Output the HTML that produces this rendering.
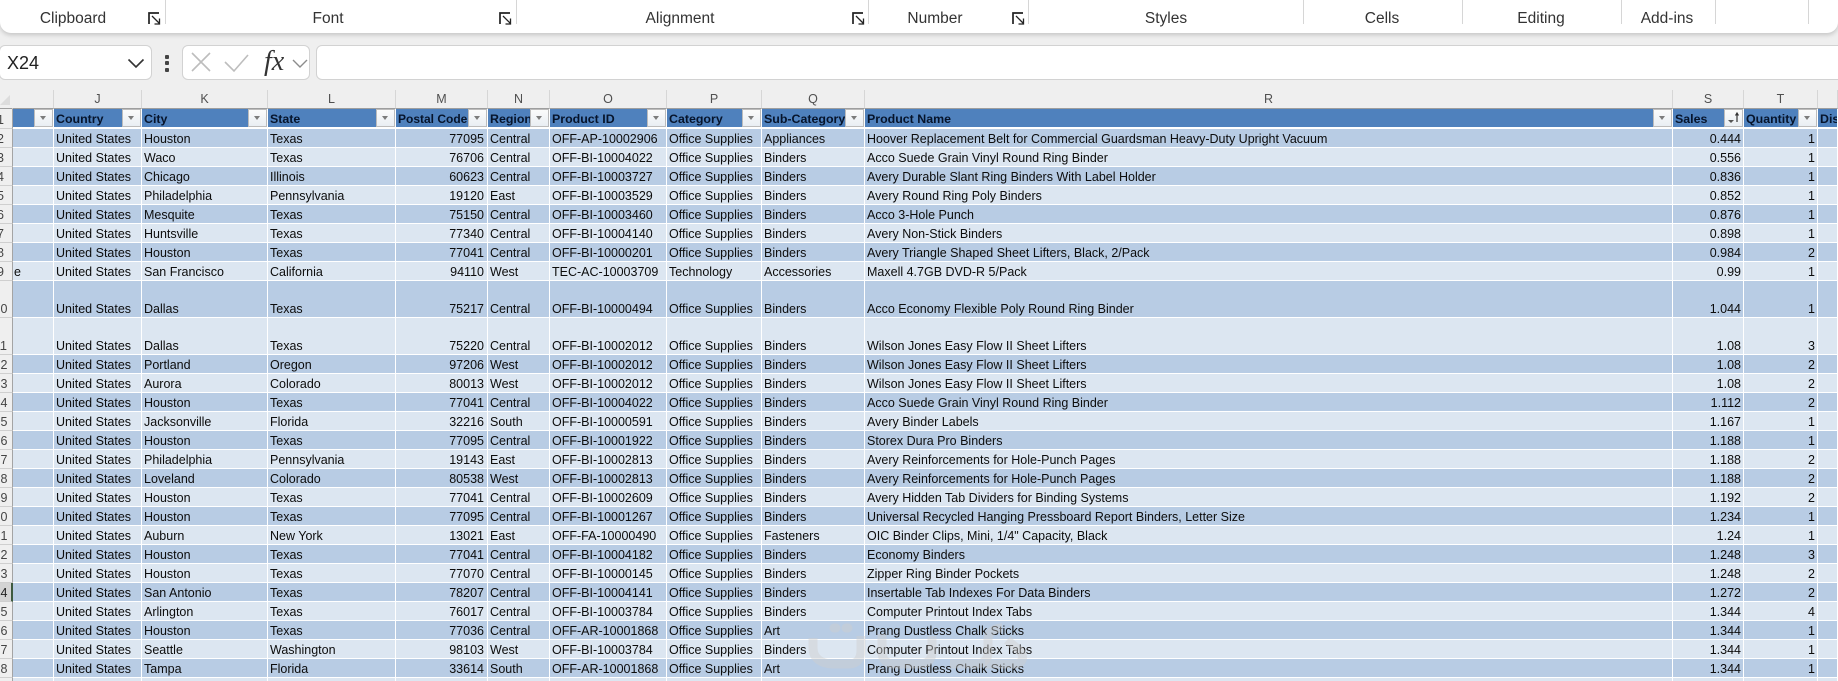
<!DOCTYPE html>
<html><head><meta charset="utf-8"><title>Sheet</title>
<style>
html,body{margin:0;padding:0;width:1838px;height:681px;overflow:hidden;background:#efefef}
body{position:relative;font-family:"Liberation Sans",sans-serif}
.rb{position:absolute;left:0;top:-10px;width:1838px;height:42.5px;background:#fff;border-radius:0 0 11px 11px;box-shadow:0 2px 5px rgba(0,0,0,.18)}
.lb{position:absolute;top:9px;font-size:15.5px;line-height:20px;color:#333;transform:translateX(-50%);white-space:nowrap}
.sp{position:absolute;top:0;width:1px;height:24px;background:#d6d6d6}
.dl{position:absolute;top:12px}
.bx{position:absolute;top:45px;height:33px;background:#fff;border:1px solid #d2d2d2;border-radius:6px}
.dot{position:absolute;left:165px;width:4px;height:4px;background:#444;border-radius:1px}
table{position:absolute;left:0;top:90px;width:1838px;border-collapse:separate;border-spacing:0;table-layout:fixed;font-size:12.5px;line-height:15px;color:#0c0c0c}
td{padding:0 0 0 2px;box-sizing:border-box;height:19px;white-space:nowrap;overflow:hidden;vertical-align:bottom;border-right:1px solid #fff;border-bottom:1px solid #fff}
.n{text-align:right;padding:0 2px 0 0}
td.n:nth-child(6){padding-right:3px}
.d td{background:#b8cce4}.l td{background:#dce6f1}
.c td{height:19px;background:#efefef;border-right:1px solid #d6d6d6;border-bottom:1px solid #9e9e9e;text-align:center;padding:0;color:#505050;line-height:17px;vertical-align:middle}
.h td{height:20px;background:#4f81bd;border-bottom:2px solid #fff;border-right:1px solid #fff;font-weight:bold;font-size:12.4px;color:#06142b;position:relative;line-height:15px;overflow:hidden}
.h td:nth-child(6){font-size:12px}
tr td:first-child{padding:0;background:#efefef;border-right:1px solid #a4a4a4;border-bottom:1px solid #cfcfcf;position:relative;color:#444;overflow:visible;font-weight:normal;font-size:12.5px}
tr.c td:first-child{border-right:1px solid #efefef;border-bottom:1px solid #9e9e9e}
td:first-child span{position:absolute;left:-50px;width:101px;bottom:0;text-align:center}
.f{position:absolute;right:0;top:0;width:19px;height:18px;box-sizing:border-box;background:linear-gradient(#fbfbfb,#e9eef3);border:1px solid #bcbcbc}
.f:after{content:"";position:absolute;left:4.5px;top:6px;border:3.5px solid transparent;border-top:4px solid #7c7c7c;border-bottom:0}
.f.s:after{display:none}
tr.sel td:first-child{background:#d4d4d4;border-right:2px solid #3d5a3f;color:#222}
.wm{position:absolute;left:0;top:0;pointer-events:none}
</style></head><body>
<div class="rb"></div>
<div class="sp" style="left:165px"></div><div class="sp" style="left:516px"></div><div class="sp" style="left:868px"></div><div class="sp" style="left:1028px"></div><div class="sp" style="left:1303px"></div><div class="sp" style="left:1462px"></div><div class="sp" style="left:1621px"></div><div class="sp" style="left:1715px"></div><div class="sp" style="left:1808px"></div>
<div class="lb" style="left:73px">Clipboard</div><div class="lb" style="left:328px">Font</div><div class="lb" style="left:680px">Alignment</div><div class="lb" style="left:935px">Number</div><div class="lb" style="left:1166px">Styles</div><div class="lb" style="left:1382px">Cells</div><div class="lb" style="left:1541px">Editing</div><div class="lb" style="left:1667px">Add-ins</div>
<svg class="dl" style="left:148px" width="13" height="13" viewBox="0 0 13 13" fill="none" stroke="#222" stroke-width="1.7"><path d="M1 12V1h10"/><path stroke-width="1.3" d="M4 4l7.500 7.500M11.500 6.500v5.500H6.500"/></svg>
<svg class="dl" style="left:499px" width="13" height="13" viewBox="0 0 13 13" fill="none" stroke="#222" stroke-width="1.7"><path d="M1 12V1h10"/><path stroke-width="1.3" d="M4 4l7.500 7.500M11.500 6.500v5.500H6.500"/></svg>
<svg class="dl" style="left:852px" width="13" height="13" viewBox="0 0 13 13" fill="none" stroke="#222" stroke-width="1.7"><path d="M1 12V1h10"/><path stroke-width="1.3" d="M4 4l7.500 7.500M11.500 6.500v5.500H6.500"/></svg>
<svg class="dl" style="left:1012px" width="13" height="13" viewBox="0 0 13 13" fill="none" stroke="#222" stroke-width="1.7"><path d="M1 12V1h10"/><path stroke-width="1.3" d="M4 4l7.500 7.500M11.500 6.500v5.500H6.500"/></svg>

<div class="bx" style="left:-1px;width:151px"></div>
<div style="position:absolute;left:7px;top:52px;font-size:18px;line-height:22px;color:#222">X24</div>
<svg style="position:absolute;left:126px;top:56px" width="20" height="14" fill="none" stroke="#333" stroke-width="1.6"><path d="M2.500 3.500l7.500 7.500 7.500-7.500"/></svg>
<div class="dot" style="top:55px"></div><div class="dot" style="top:61px"></div><div class="dot" style="top:68px"></div>
<div class="bx" style="left:182px;width:126px"></div>
<svg style="position:absolute;left:188px;top:50px" width="125" height="26" fill="none" stroke-width="1.6"><path stroke="#bdbdbd" d="M4 3l18 18M22 3L4 21"/><path stroke="#bdbdbd" d="M37 12l9 9 14-16"/><path stroke="#8c8c8c" stroke-width="1.4" d="M105 10l7 7 7-7"/></svg>
<div style="position:absolute;left:264px;top:46px;font:italic 28px/32px 'Liberation Serif',serif;color:#333">fx</div>
<div class="bx" style="left:316px;width:1540px"></div>

<table>
<colgroup><col style="width:13px"><col style="width:41px"><col style="width:88px"><col style="width:126px"><col style="width:128px"><col style="width:92px"><col style="width:62px"><col style="width:117px"><col style="width:95px"><col style="width:103px"><col style="width:808px"><col style="width:71px"><col style="width:74px"><col style="width:20px"></colgroup>
<tr class="c"><td></td><td></td><td>J</td><td>K</td><td>L</td><td>M</td><td>N</td><td>O</td><td>P</td><td>Q</td><td>R</td><td>S</td><td>T</td><td></td></tr>
<tr class="h"><td><span>1</span></td><td><i class="f"></i></td><td>Country<i class="f"></i></td><td>City<i class="f"></i></td><td>State<i class="f"></i></td><td>Postal Code<i class="f"></i></td><td>Region<i class="f"></i></td><td>Product ID<i class="f"></i></td><td>Category<i class="f"></i></td><td>Sub-Category<i class="f"></i></td><td>Product Name<i class="f"></i></td><td>Sales<i class="f s"><svg width="17" height="16" style="position:absolute;left:0;top:0"><path d="M3 10h6l-3 3z" fill="#555"/><path d="M12 12V4M10.500 5.500L12 3l1.500 2.500" stroke="#333" stroke-width="1.200" fill="none"/></svg></i></td><td>Quantity<i class="f"></i></td><td>Dis</td></tr>
<tr class="d"><td style="height:18px"><span>2</span></td><td style="height:18px"></td><td>United States</td><td>Houston</td><td>Texas</td><td class="n">77095</td><td>Central</td><td>OFF-AP-10002906</td><td>Office Supplies</td><td>Appliances</td><td>Hoover Replacement Belt for Commercial Guardsman Heavy-Duty Upright Vacuum</td><td class="n">0.444</td><td class="n">1</td><td></td></tr>
<tr class="l"><td><span>3</span></td><td></td><td>United States</td><td>Waco</td><td>Texas</td><td class="n">76706</td><td>Central</td><td>OFF-BI-10004022</td><td>Office Supplies</td><td>Binders</td><td>Acco Suede Grain Vinyl Round Ring Binder</td><td class="n">0.556</td><td class="n">1</td><td></td></tr>
<tr class="d"><td><span>4</span></td><td></td><td>United States</td><td>Chicago</td><td>Illinois</td><td class="n">60623</td><td>Central</td><td>OFF-BI-10003727</td><td>Office Supplies</td><td>Binders</td><td>Avery Durable Slant Ring Binders With Label Holder</td><td class="n">0.836</td><td class="n">1</td><td></td></tr>
<tr class="l"><td><span>5</span></td><td></td><td>United States</td><td>Philadelphia</td><td>Pennsylvania</td><td class="n">19120</td><td>East</td><td>OFF-BI-10003529</td><td>Office Supplies</td><td>Binders</td><td>Avery Round Ring Poly Binders</td><td class="n">0.852</td><td class="n">1</td><td></td></tr>
<tr class="d"><td><span>6</span></td><td></td><td>United States</td><td>Mesquite</td><td>Texas</td><td class="n">75150</td><td>Central</td><td>OFF-BI-10003460</td><td>Office Supplies</td><td>Binders</td><td>Acco 3-Hole Punch</td><td class="n">0.876</td><td class="n">1</td><td></td></tr>
<tr class="l"><td><span>7</span></td><td></td><td>United States</td><td>Huntsville</td><td>Texas</td><td class="n">77340</td><td>Central</td><td>OFF-BI-10004140</td><td>Office Supplies</td><td>Binders</td><td>Avery Non-Stick Binders</td><td class="n">0.898</td><td class="n">1</td><td></td></tr>
<tr class="d"><td><span>8</span></td><td></td><td>United States</td><td>Houston</td><td>Texas</td><td class="n">77041</td><td>Central</td><td>OFF-BI-10000201</td><td>Office Supplies</td><td>Binders</td><td>Avery Triangle Shaped Sheet Lifters, Black, 2/Pack</td><td class="n">0.984</td><td class="n">2</td><td></td></tr>
<tr class="l"><td><span>9</span></td><td style="padding-left:1px">e</td><td>United States</td><td>San Francisco</td><td>California</td><td class="n">94110</td><td>West</td><td>TEC-AC-10003709</td><td>Technology</td><td>Accessories</td><td>Maxell 4.7GB DVD-R 5/Pack</td><td class="n">0.99</td><td class="n">1</td><td></td></tr>
<tr class="d"><td style="height:37px"><span>10</span></td><td style="height:37px"></td><td>United States</td><td>Dallas</td><td>Texas</td><td class="n">75217</td><td>Central</td><td>OFF-BI-10000494</td><td>Office Supplies</td><td>Binders</td><td>Acco Economy Flexible Poly Round Ring Binder</td><td class="n">1.044</td><td class="n">1</td><td></td></tr>
<tr class="l"><td style="height:37px"><span>11</span></td><td style="height:37px"></td><td>United States</td><td>Dallas</td><td>Texas</td><td class="n">75220</td><td>Central</td><td>OFF-BI-10002012</td><td>Office Supplies</td><td>Binders</td><td>Wilson Jones Easy Flow II Sheet Lifters</td><td class="n">1.08</td><td class="n">3</td><td></td></tr>
<tr class="d"><td><span>12</span></td><td></td><td>United States</td><td>Portland</td><td>Oregon</td><td class="n">97206</td><td>West</td><td>OFF-BI-10002012</td><td>Office Supplies</td><td>Binders</td><td>Wilson Jones Easy Flow II Sheet Lifters</td><td class="n">1.08</td><td class="n">2</td><td></td></tr>
<tr class="l"><td><span>13</span></td><td></td><td>United States</td><td>Aurora</td><td>Colorado</td><td class="n">80013</td><td>West</td><td>OFF-BI-10002012</td><td>Office Supplies</td><td>Binders</td><td>Wilson Jones Easy Flow II Sheet Lifters</td><td class="n">1.08</td><td class="n">2</td><td></td></tr>
<tr class="d"><td><span>14</span></td><td></td><td>United States</td><td>Houston</td><td>Texas</td><td class="n">77041</td><td>Central</td><td>OFF-BI-10004022</td><td>Office Supplies</td><td>Binders</td><td>Acco Suede Grain Vinyl Round Ring Binder</td><td class="n">1.112</td><td class="n">2</td><td></td></tr>
<tr class="l"><td><span>15</span></td><td></td><td>United States</td><td>Jacksonville</td><td>Florida</td><td class="n">32216</td><td>South</td><td>OFF-BI-10000591</td><td>Office Supplies</td><td>Binders</td><td>Avery Binder Labels</td><td class="n">1.167</td><td class="n">1</td><td></td></tr>
<tr class="d"><td><span>16</span></td><td></td><td>United States</td><td>Houston</td><td>Texas</td><td class="n">77095</td><td>Central</td><td>OFF-BI-10001922</td><td>Office Supplies</td><td>Binders</td><td>Storex Dura Pro Binders</td><td class="n">1.188</td><td class="n">1</td><td></td></tr>
<tr class="l"><td><span>17</span></td><td></td><td>United States</td><td>Philadelphia</td><td>Pennsylvania</td><td class="n">19143</td><td>East</td><td>OFF-BI-10002813</td><td>Office Supplies</td><td>Binders</td><td>Avery Reinforcements for Hole-Punch Pages</td><td class="n">1.188</td><td class="n">2</td><td></td></tr>
<tr class="d"><td><span>18</span></td><td></td><td>United States</td><td>Loveland</td><td>Colorado</td><td class="n">80538</td><td>West</td><td>OFF-BI-10002813</td><td>Office Supplies</td><td>Binders</td><td>Avery Reinforcements for Hole-Punch Pages</td><td class="n">1.188</td><td class="n">2</td><td></td></tr>
<tr class="l"><td><span>19</span></td><td></td><td>United States</td><td>Houston</td><td>Texas</td><td class="n">77041</td><td>Central</td><td>OFF-BI-10002609</td><td>Office Supplies</td><td>Binders</td><td>Avery Hidden Tab Dividers for Binding Systems</td><td class="n">1.192</td><td class="n">2</td><td></td></tr>
<tr class="d"><td><span>20</span></td><td></td><td>United States</td><td>Houston</td><td>Texas</td><td class="n">77095</td><td>Central</td><td>OFF-BI-10001267</td><td>Office Supplies</td><td>Binders</td><td>Universal Recycled Hanging Pressboard Report Binders, Letter Size</td><td class="n">1.234</td><td class="n">1</td><td></td></tr>
<tr class="l"><td><span>21</span></td><td></td><td>United States</td><td>Auburn</td><td>New York</td><td class="n">13021</td><td>East</td><td>OFF-FA-10000490</td><td>Office Supplies</td><td>Fasteners</td><td>OIC Binder Clips, Mini, 1/4" Capacity, Black</td><td class="n">1.24</td><td class="n">1</td><td></td></tr>
<tr class="d"><td><span>22</span></td><td></td><td>United States</td><td>Houston</td><td>Texas</td><td class="n">77041</td><td>Central</td><td>OFF-BI-10004182</td><td>Office Supplies</td><td>Binders</td><td>Economy Binders</td><td class="n">1.248</td><td class="n">3</td><td></td></tr>
<tr class="l"><td><span>23</span></td><td></td><td>United States</td><td>Houston</td><td>Texas</td><td class="n">77070</td><td>Central</td><td>OFF-BI-10000145</td><td>Office Supplies</td><td>Binders</td><td>Zipper Ring Binder Pockets</td><td class="n">1.248</td><td class="n">2</td><td></td></tr>
<tr class="d sel"><td><span>24</span></td><td></td><td>United States</td><td>San Antonio</td><td>Texas</td><td class="n">78207</td><td>Central</td><td>OFF-BI-10004141</td><td>Office Supplies</td><td>Binders</td><td>Insertable Tab Indexes For Data Binders</td><td class="n">1.272</td><td class="n">2</td><td></td></tr>
<tr class="l"><td><span>25</span></td><td></td><td>United States</td><td>Arlington</td><td>Texas</td><td class="n">76017</td><td>Central</td><td>OFF-BI-10003784</td><td>Office Supplies</td><td>Binders</td><td>Computer Printout Index Tabs</td><td class="n">1.344</td><td class="n">4</td><td></td></tr>
<tr class="d"><td><span>26</span></td><td></td><td>United States</td><td>Houston</td><td>Texas</td><td class="n">77036</td><td>Central</td><td>OFF-AR-10001868</td><td>Office Supplies</td><td>Art</td><td>Prang Dustless Chalk Sticks</td><td class="n">1.344</td><td class="n">1</td><td></td></tr>
<tr class="l"><td><span>27</span></td><td></td><td>United States</td><td>Seattle</td><td>Washington</td><td class="n">98103</td><td>West</td><td>OFF-BI-10003784</td><td>Office Supplies</td><td>Binders</td><td>Computer Printout Index Tabs</td><td class="n">1.344</td><td class="n">1</td><td></td></tr>
<tr class="d"><td><span>28</span></td><td></td><td>United States</td><td>Tampa</td><td>Florida</td><td class="n">33614</td><td>South</td><td>OFF-AR-10001868</td><td>Office Supplies</td><td>Art</td><td>Prang Dustless Chalk Sticks</td><td class="n">1.344</td><td class="n">1</td><td></td></tr>
<tr class="l"><td></td><td></td><td></td><td></td><td></td><td></td><td></td><td></td><td></td><td></td><td></td><td></td><td></td><td></td></tr>
</table>
<svg style="position:absolute;left:0;top:94px" width="12" height="12"><path d="M10 1v10H0z" fill="#dcdcdc"/></svg>
<svg class="wm" width="1838" height="681" fill="none" stroke="#cfcfcf" stroke-opacity=".45" stroke-width="9"><path d="M813 638v10c0 10 8 16 20 16h16c8 0 12-5 12-14v-14"/><path d="M882 634v18c0 8 5 12 12 12h26c8 0 12-5 12-12v-16"/><path d="M950 664h26c8 0 12-5 12-12v-12c0-8 6-12 14-12"/><path d="M985 664h30c8 0 10-8 4-14l-12-10"/><path d="M834 628h2M846 628h2" stroke-width="9" stroke-linecap="round"/></svg>
</body></html>
